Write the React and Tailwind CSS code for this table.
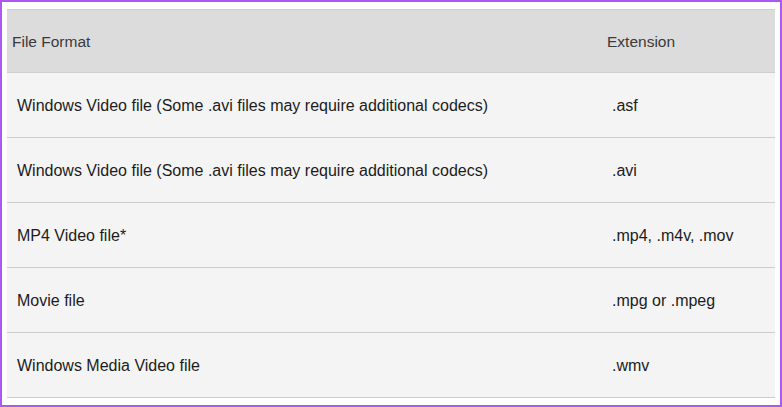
import React from "react";

const rows = [
  ["Windows Video file (Some .avi files may require additional codecs)", ".asf"],
  ["Windows Video file (Some .avi files may require additional codecs)", ".avi"],
  ["MP4 Video file*", ".mp4, .m4v, .mov"],
  ["Movie file", ".mpg or .mpeg"],
  ["Windows Media Video file", ".wmv"],
];

export default function App() {
  return (
    <div className="h-[407px] w-[782px] border-2 border-[#ab58f4] bg-white pt-[7px] pl-[5px] pr-[5px] font-['Liberation_Sans',Arial,sans-serif]">
      <div className="w-[768px] bg-[#f4f4f4]">
        {/* Header */}
        <div className="flex h-[64px] items-center border-t border-b border-[#cfcfcf] bg-[#dcdcdc] pt-[2px] text-[15.5px] text-[#3a3a3a]">
          <div className="w-[595px] pl-[5px]">File Format</div>
          <div className="pl-[5px]">Extension</div>
        </div>

        {/* Rows */}
        {rows.map(([format, ext], i) => (
          <div
            key={i}
            className="flex h-[65px] items-center border-b border-[#cdcdcd] pt-[2px] text-[16px] text-[#1c1c1c]"
          >
            <div className="w-[595px] pl-[10px]">{format}</div>
            <div className="pl-[10px]">{ext}</div>
          </div>
        ))}
      </div>
    </div>
  );
}
